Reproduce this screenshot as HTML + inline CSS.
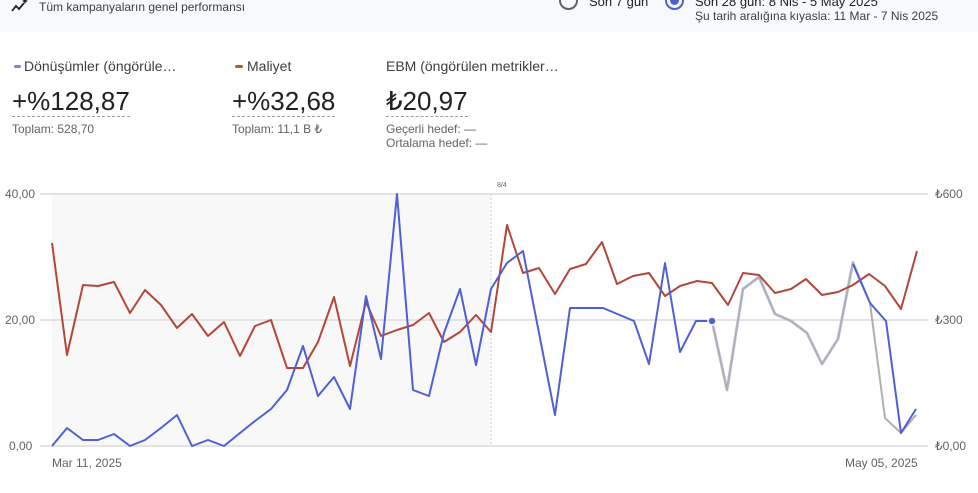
<!DOCTYPE html>
<html><head><meta charset="utf-8"><style>
body{margin:0;width:978px;height:493px;background:#fff;font-family:"Liberation Sans",sans-serif;color:#3c4043;position:relative;overflow:hidden}
.a{position:absolute;white-space:nowrap}
.hdr{position:absolute;left:0;top:0;width:978px;height:32px;background:#f8f9fa}
.lbl{font-size:14px;color:#3c4043}
.big{font-size:26px;color:#202124;border-bottom:1px dashed #9aa0a6;line-height:30px}
.sm{font-size:12px;color:#5f6368}
</style></head><body>
<div class="hdr"></div>
<svg class="a" style="left:10px;top:-2px" width="18" height="16" viewBox="0 0 18 16"><path d="M2 13 L6 8 L9 11 L14 5" stroke="#202124" stroke-width="1.8" fill="none"/><path d="M15 0 l1 2 2 1 -2 1 -1 2 -1 -2 -2 -1 2 -1z" fill="#202124"/></svg>
<div class="a sm" style="left:39px;top:0px;color:#3c4043">Tüm kampanyaların genel performansı</div>
<div class="a" style="left:559px;top:-9px;width:15px;height:15px;border:2px solid #5f6368;border-radius:50%"></div>
<div class="a" style="left:589px;top:-6px;font-size:13px;color:#202124">Son 7 gün</div>
<div class="a" style="left:665px;top:-9px;width:15px;height:15px;border:2px solid #4c5fd5;border-radius:50%"></div>
<div class="a" style="left:670px;top:-4px;width:9px;height:9px;background:#4c5fd5;border-radius:50%"></div>
<div class="a" style="left:695px;top:-6px;font-size:13px;color:#202124">Son 28 gün: 8 Nis - 5 May 2025</div>
<div class="a sm" style="left:695px;top:9px;color:#3c4043">Şu tarih aralığına kıyasla: 11 Mar - 7 Nis 2025</div>

<div class="a" style="left:14px;top:65px;width:7px;height:3px;background:#7b83e0;border-radius:2px"></div>
<div class="a lbl" style="left:24px;top:58px">Dönüşümler (öngörüle…</div>
<div class="a big" style="left:12px;top:86px">+%128,87</div>
<div class="a sm" style="left:12px;top:122px">Toplam: 528,70</div>

<div class="a" style="left:235px;top:65px;width:8px;height:3px;background:#c5522f;border-radius:2px"></div>
<div class="a lbl" style="left:247px;top:58px">Maliyet</div>
<div class="a big" style="left:232px;top:86px">+%32,68</div>
<div class="a sm" style="left:232px;top:122px">Toplam: 11,1 B ₺</div>

<div class="a lbl" style="left:386px;top:58px">EBM (öngörülen metrikler…</div>
<div class="a big" style="left:386px;top:86px">₺20,97</div>
<div class="a sm" style="left:386px;top:122px">Geçerli hedef: —</div>
<div class="a sm" style="left:386px;top:136px">Ortalama hedef: —</div>

<svg class="a" style="left:0;top:0" width="978" height="493">
<rect x="52" y="194" width="439" height="252" fill="#f8f8f9"/>
<g stroke="#e3e3e3" stroke-width="2"><line x1="40" y1="194" x2="928" y2="194"/><line x1="40" y1="320" x2="928" y2="320"/><line x1="40" y1="446" x2="928" y2="446"/></g>
<line x1="491" y1="194" x2="491" y2="446" stroke="#ccc" stroke-dasharray="2,2"/>
<g font-size="12" fill="#5f6368" font-family="Liberation Sans,sans-serif">
<text x="5" y="198">40,00</text><text x="5" y="324">20,00</text><text x="9" y="450">0,00</text>
<text x="935" y="198">₺600</text><text x="935" y="324">₺300</text><text x="935" y="450">₺0,00</text>
<text x="52" y="467">Mar 11, 2025</text><text x="845" y="467">May 05, 2025</text>
<text x="497" y="187" font-size="7">8/4</text></g>
<g fill="none" stroke-width="2" stroke-linejoin="round">
<polyline stroke="#c9ccf2" stroke-width="3" points="712,321 727,390 743,289 759,277 775,314 791,321 807,333 822,364 838,339 853,262"/>
<polyline stroke="#b0b0b0" points="712,321 727,390 743,289 759,277 775,314 791,321 807,333 822,364 838,339 853,262 870,303 885,418 901,433 916,415"/>
<polyline stroke="#b4463a" points="52,243 67,355 83,285 98,286 114,282 130,313 145,290 161,305 177,328 192,314 208,336 224,322 240,356 255,326 271,320 287,368 303,368 318,342 334,297 350,366 366,302 381,336 397,330 413,325 429,313 444,342 460,332 476,315 491,332 507,225 523,273 539,268 555,294 570,269 586,264 602,242 617,284 633,276 649,273 665,296 680,286 697,281 712,283 728,305 743,273 759,275 775,293 791,289 806,279 822,295 838,292 853,285 869,274 885,286 901,309 917,251"/>
<polyline stroke="#4f5fd6" points="52,446 67,428 83,440 98,440 114,434 130,446 145,440 161,428 177,415 192,446 208,440 224,446 240,433 255,421 271,409 287,390 303,346 318,396 334,377 350,409 366,296 381,359 397,194 413,390 429,396 444,333 460,289 476,365 491,289 507,263 523,251 555,415 570,308 603,308 634,321 649,364 665,263 680,352 696,321 712,321"/>
<polyline stroke="#4f5fd6" points="853,264 870,303 886,321 901,433 916,409"/>
</g>
<circle cx="712" cy="321" r="4" fill="#4f5fd6" stroke="#fff" stroke-width="1.5"/>
</svg>
</body></html>
